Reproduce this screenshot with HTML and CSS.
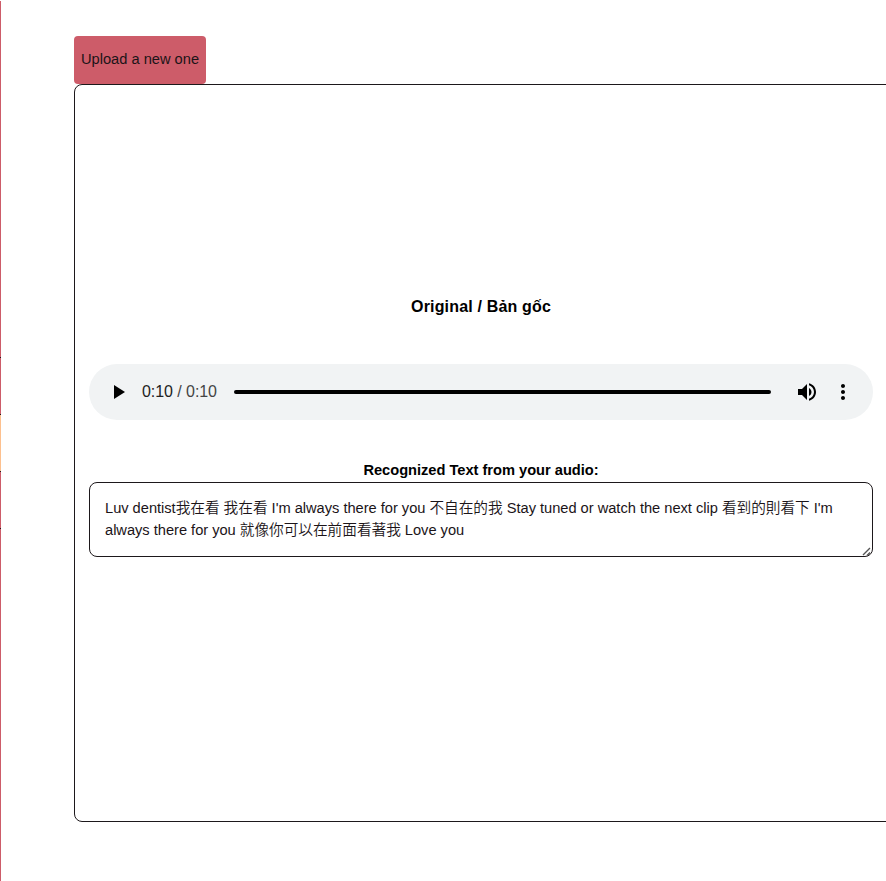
FILE: index.html
```html
<!DOCTYPE html>
<html lang="vi">
<head>
<meta charset="utf-8">
<title>Upload a new one</title>
<link rel="stylesheet" href="styles.css">
</head>
<body>
<div class="page">
  <nav class="rail">
    <span class="rail-top"></span>
    <span class="rail-item"></span>
    <span class="rail-item active"></span>
    <span class="rail-item"></span>
    <span class="rail-rest"></span>
  </nav>
  <main class="content">
    <button class="upload">Upload a new one</button>
    <section class="card">
      <h2 class="title">Original / Bản gốc</h2>
      <div class="player">
        <svg class="icon" viewBox="0 0 24 24"><path d="M8 5v14l11-7z"/></svg>
        <span class="time">0:10<span class="total"> / 0:10</span></span>
        <div class="track"></div>
        <svg class="icon volume" viewBox="0 0 24 24"><path d="M3 9v6h4l5 5V4L7 9H3zm13.5 3c0-1.77-1.02-3.29-2.5-4.03v8.05c1.48-.73 2.5-2.25 2.5-4.02zM14 3.23v2.06c2.89.86 5 3.54 5 6.71s-2.11 5.85-5 6.71v2.06c4.01-.91 7-4.49 7-8.77s-2.99-7.86-7-8.77z"/></svg>
        <svg class="icon more" viewBox="0 0 24 24"><path d="M12 8c1.1 0 2-.9 2-2s-.9-2-2-2-2 .9-2 2 .9 2 2 2zm0 2c-1.1 0-2 .9-2 2s.9 2 2 2 2-.9 2-2-.9-2-2-2zm0 6c-1.1 0-2 .9-2 2s.9 2 2 2 2-.9 2-2-.9-2-2-2z"/></svg>
      </div>
      <label class="label" for="recognized">Recognized Text from your audio:</label>
      <div class="result-box">
        <textarea class="result" id="recognized" spellcheck="false">Luv dentist我在看 我在看 I'm always there for you 不自在的我 Stay tuned or watch the next clip 看到的則看下 I'm always there for you 就像你可以在前面看著我 Love you</textarea>
        <svg class="grip" viewBox="0 0 9 9"><path d="M1 8L8 1M5 8.5L8 5.5"/></svg>
      </div>
    </section>
  </main>
</div>
</body>
</html>
```
FILE: styles.css
```css
* { box-sizing: border-box; }

body {
  margin: 0;
  background: #fff;
  color: #000;
  font: 11pt/22px "Liberation Sans", "Noto Sans CJK TC", sans-serif;
  overflow: hidden;
}

.page {
  display: flex;
  height: 881px;
}

.rail {
  flex: none;
  display: flex;
  flex-direction: column;
  width: 1px;
  padding-top: 1px;
}

.rail span { background: #cd5c69; }
.rail-top { height: 357px; border-bottom: 1px solid #231a1e; }
.rail-item { height: 57px; border-bottom: 1px solid #231a1e; }
.rail .active { background: #fdc08e; }
.rail-rest { flex: 1; }

.content {
  flex: none;
  display: flex;
  flex-direction: column;
  align-items: flex-start;
  width: 908px;
  padding: 36px 0 0 73px;
}

.upload {
  width: 132px;
  height: 48px;
  padding: 0 0 3px;
  border: 0;
  border-radius: 4px;
  background: #cd5c69;
  color: #1b1418;
  font: inherit;
  white-space: nowrap;
}

.card {
  display: flex;
  flex-direction: column;
  justify-content: center;
  width: 830px;
  height: 738px;
  padding: 0 30px 55px 14px;
  border: 1px solid #1d181b;
  border-radius: 8px;
}

.title {
  margin: 1px 0 45px;
  font-size: 16px;
  line-height: 24px;
  letter-spacing: 0.17px;
  text-align: center;
}

.player {
  display: flex;
  align-items: center;
  height: 56px;
  margin-bottom: 39px;
  padding: 0 18px 0 17px;
  border-radius: 28px;
  background: #f1f3f4;
}

.icon {
  flex: none;
  width: 24px;
  height: 24px;
  fill: #000;
}

.time {
  flex: none;
  width: 104px;
  padding: 0 0 1px 12px;
  font-size: 16px;
  letter-spacing: -0.06px;
  white-space: nowrap;
  color: #222;
}

.total { color: #444; }

.track {
  flex: 1;
  height: 4px;
  border-radius: 2px;
  background: #000;
}

.volume { margin-left: 24px; }
.more { margin-left: 12px; }

.label {
  height: 23px;
  font-weight: bold;
  letter-spacing: -0.02px;
  text-align: center;
}

.result-box {
  position: relative;
  height: 75px;
}

.result {
  display: block;
  width: 100%;
  height: 75px;
  margin: 0;
  padding: 14px 15px;
  border: 1px solid #1d181b;
  border-radius: 8px;
  background: #fff;
  color: #1b1418;
  font: inherit;
  font-weight: 350;
  letter-spacing: -0.02px;
  resize: none;
  overflow: auto;
}

.grip {
  position: absolute;
  right: 2px;
  bottom: 1px;
  width: 9px;
  height: 9px;
  fill: none;
  stroke: #555;
  stroke-width: 1.4;
}
```
